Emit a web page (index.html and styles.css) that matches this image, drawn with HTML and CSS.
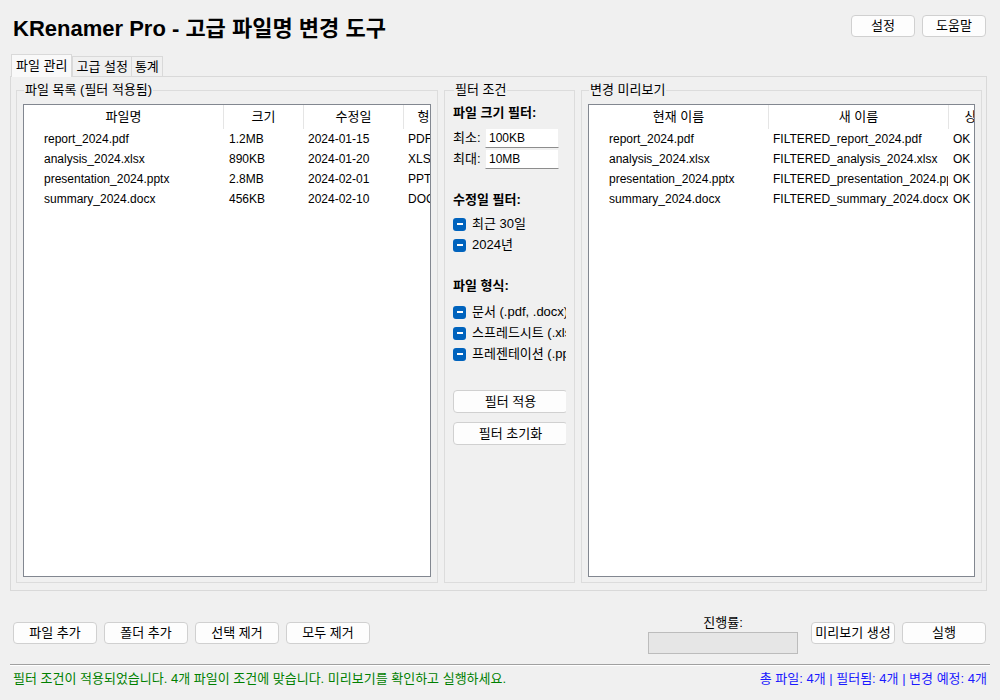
FILE: index.html
```html
<!DOCTYPE html>
<html lang="ko">
<head>
<meta charset="utf-8">
<title>KRenamer Pro</title>
<link rel="stylesheet" href="styles.css">
</head>
<body>
<div class="app">
  <header class="topbar">
    <h1 class="title">KRenamer Pro - 고급 파일명 변경 도구</h1>
    <div class="top-actions">
      <button class="btn btn-top">설정</button>
      <button class="btn btn-top">도움말</button>
    </div>
  </header>

  <nav class="tabs">
    <div class="tab active">파일 관리</div>
    <div class="tab">고급 설정</div>
    <div class="tab">통계</div>
  </nav>

  <section class="panel">
    <div class="group">
      <div class="group-title">파일 목록 (필터 적용됨)</div>
      <div class="listbox">
        <div class="grid grid-files head">
          <div class="hcell">파일명</div>
          <div class="hcell">크기</div>
          <div class="hcell">수정일</div>
          <div class="hcell">형식</div>
        </div>
        <div class="grid grid-files row">
          <div class="cell first">report_2024.pdf</div><div class="cell">1.2MB</div><div class="cell">2024-01-15</div><div class="cell">PDF</div>
        </div>
        <div class="grid grid-files row">
          <div class="cell first">analysis_2024.xlsx</div><div class="cell">890KB</div><div class="cell">2024-01-20</div><div class="cell">XLSX</div>
        </div>
        <div class="grid grid-files row">
          <div class="cell first">presentation_2024.pptx</div><div class="cell">2.8MB</div><div class="cell">2024-02-01</div><div class="cell">PPTX</div>
        </div>
        <div class="grid grid-files row">
          <div class="cell first">summary_2024.docx</div><div class="cell">456KB</div><div class="cell">2024-02-10</div><div class="cell">DOCX</div>
        </div>
      </div>
    </div>

    <div class="group group-filter">
      <div class="group-title">필터 조건</div>
      <div class="filter-body">
        <div class="section-label first-label">파일 크기 필터:</div>
        <div class="field-row first-field">
          <span class="field-label">최소:</span>
          <div class="input">100KB</div>
        </div>
        <div class="field-row">
          <span class="field-label">최대:</span>
          <div class="input">10MB</div>
        </div>

        <div class="section-label">수정일 필터:</div>
        <div class="checks">
          <div class="check"><span class="box"></span><span class="check-text">최근 30일</span></div>
          <div class="check"><span class="box"></span><span class="check-text">2024년</span></div>
        </div>

        <div class="section-label">파일 형식:</div>
        <div class="checks checks-type">
          <div class="check"><span class="box"></span><span class="check-text">문서 (.pdf, .docx)</span></div>
          <div class="check"><span class="box"></span><span class="check-text">스프레드시트 (.xlsx)</span></div>
          <div class="check"><span class="box"></span><span class="check-text">프레젠테이션 (.pptx)</span></div>
        </div>

        <button class="btn btn-wide btn-apply">필터 적용</button>
        <button class="btn btn-wide btn-reset">필터 초기화</button>
      </div>
    </div>

    <div class="group">
      <div class="group-title">변경 미리보기</div>
      <div class="listbox">
        <div class="grid grid-preview head">
          <div class="hcell">현재 이름</div>
          <div class="hcell">새 이름</div>
          <div class="hcell">상태</div>
        </div>
        <div class="grid grid-preview row">
          <div class="cell first">report_2024.pdf</div><div class="cell">FILTERED_report_2024.pdf</div><div class="cell">OK</div>
        </div>
        <div class="grid grid-preview row">
          <div class="cell first">analysis_2024.xlsx</div><div class="cell">FILTERED_analysis_2024.xlsx</div><div class="cell">OK</div>
        </div>
        <div class="grid grid-preview row">
          <div class="cell first">presentation_2024.pptx</div><div class="cell">FILTERED_presentation_2024.pptx</div><div class="cell">OK</div>
        </div>
        <div class="grid grid-preview row">
          <div class="cell first">summary_2024.docx</div><div class="cell">FILTERED_summary_2024.docx</div><div class="cell">OK</div>
        </div>
      </div>
    </div>
  </section>

  <div class="actions">
    <div class="action-left">
      <button class="btn btn-action">파일 추가</button>
      <button class="btn btn-action">폴더 추가</button>
      <button class="btn btn-action">선택 제거</button>
      <button class="btn btn-action">모두 제거</button>
    </div>
    <div class="action-right">
      <div class="progress-group">
        <div class="progress-label">진행률:</div>
        <div class="progress-bar"></div>
      </div>
      <button class="btn btn-action">미리보기 생성</button>
      <button class="btn btn-action">실행</button>
    </div>
  </div>

  <div class="separator"></div>

  <footer class="status">
    <span class="status-left">필터 조건이 적용되었습니다. 4개 파일이 조건에 맞습니다. 미리보기를 확인하고 실행하세요.</span>
    <span class="status-right">총 파일: 4개 | 필터됨: 4개 | 변경 예정: 4개</span>
  </footer>
</div>
</body>
</html>
```

FILE: styles.css
```css
* {
  box-sizing: border-box;
}

html, body {
  margin: 0;
  padding: 0;
  background: #f0f0f0;
}

body {
  font-family: "Liberation Sans", "Noto Sans CJK KR", sans-serif;
  font-size: 13px;
  line-height: 16px;
  color: #000;
}

.app {
  width: 1000px;
  height: 700px;
  display: flex;
  flex-direction: column;
  overflow: hidden;
}

/* ---------- top bar ---------- */
.topbar {
  display: flex;
  justify-content: space-between;
  align-items: flex-start;
  padding: 15px 14px 0 13px;
  height: 37px;
}

.title {
  margin: 3px 0 0 0;
  font-size: 22px;
  line-height: 22px;
  font-weight: bold;
  white-space: nowrap;
}

.top-actions {
  display: flex;
  gap: 7px;
}

.btn {
  font-family: inherit;
  font-size: 13px;
  line-height: 20px;
  height: 22px;
  padding: 0;
  margin: 0;
  background: #fdfdfd;
  border: 1px solid #d0d0d0;
  border-radius: 4px;
  color: #000;
  text-align: center;
  white-space: nowrap;
  overflow: hidden;
}

.btn-top {
  width: 64px;
}

/* ---------- tabs ---------- */
.tabs {
  display: flex;
  align-items: flex-end;
  height: 39px;
  padding: 0 0 0 11px;
}

.tab {
  height: 20px;
  line-height: 19px;
  padding: 0 3px;
  border: 1px solid #d9d9d9;
  border-bottom: none;
  margin-left: -1px;
  background: #f0f0f0;
  white-space: nowrap;
}

.tab.active {
  position: relative;
  z-index: 1;
  height: 23px;
  line-height: 21px;
  padding: 0 4px;
  margin-left: 0;
  margin-bottom: -1px;
  background: #f9f9f9;
  border-color: #d9d9d9;
}

.tab.active + .tab {
  margin-left: 0;
}

/* ---------- panel ---------- */
.panel {
  height: 515px;
  margin: 0 13px 0 10px;
  border: 1px solid #d9d9d9;
  padding: 13px 4px 7px 5px;
  display: grid;
  grid-template-columns: 422px 131px 1fr;
  column-gap: 6px;
}

.group {
  border: 1px solid #dcdcdc;
  padding: 0 6px 5px 6px;
  display: flex;
  flex-direction: column;
  min-width: 0;
}

.group-title {
  margin: -9px 0 0 1px;
  padding: 0 1px;
  height: 16px;
  line-height: 16px;
  width: fit-content;
  background: #f0f0f0;
  white-space: nowrap;
}

.listbox {
  margin-top: 6px;
  flex: 1;
  background: #fff;
  border: 1px solid #828790;
  overflow: hidden;
}

.grid {
  display: grid;
}

.grid-files {
  grid-template-columns: 199px 80px 100px 52px;
}

.grid-preview {
  grid-template-columns: 179px 180px 56px;
}

.head {
  height: 24px;
}

.hcell {
  text-align: center;
  line-height: 23px;
  white-space: nowrap;
  overflow: hidden;
}

.hcell + .hcell {
  border-left: 1px solid #e5e5e5;
}

.row {
  height: 20px;
}

.cell {
  font-size: 12px;
  padding-left: 5px;
  line-height: 20px;
  white-space: nowrap;
  overflow: hidden;
}

.grid-files .cell:nth-child(2) {
  padding-left: 6px;
}

.cell.first {
  padding-left: 20px;
}

/* ---------- filter column ---------- */
.group-filter {
  padding: 0 8px 5px 8px;
}

.filter-body {
  display: flex;
  flex-direction: column;
  overflow: hidden;
}

.section-label {
  font-weight: bold;
  height: 16px;
  line-height: 16px;
  margin-top: 23px;
  white-space: nowrap;
}

.section-label.first-label {
  margin-top: 7px;
}

.field-row {
  display: flex;
  align-items: center;
  height: 20px;
  margin-top: 1px;
}

.field-row.first-field {
  margin-top: 7px;
}

.field-label {
  width: 32px;
  flex: none;
  white-space: nowrap;
}

.input {
  width: 74px;
  height: 20px;
  line-height: 19px;
  padding-left: 3px;
  font-size: 12px;
  background: #fff;
  border: 1px solid #f0f0f0;
  border-bottom-color: #8d8d8d;
}

.checks {
  display: flex;
  flex-direction: column;
  gap: 1px;
  margin-top: 6px;
}

.checks-type {
  margin-top: 8px;
}

.check {
  display: flex;
  align-items: center;
  height: 20px;
  white-space: nowrap;
  overflow: hidden;
}

.box {
  flex: none;
  width: 13px;
  height: 13px;
  border-radius: 3px;
  background: #0063bd;
  display: flex;
  align-items: center;
  justify-content: center;
  margin-right: 6px;
}

.box::before {
  content: "";
  width: 6px;
  height: 2px;
  background: #fff;
}

.check-text {
  white-space: nowrap;
}

.btn-wide {
  width: 115px;
  height: 23px;
  line-height: 21px;
}

.btn-apply {
  margin-top: 26px;
}

.btn-reset {
  margin-top: 9px;
}

/* ---------- actions ---------- */
.actions {
  display: flex;
  justify-content: space-between;
  align-items: flex-start;
  margin-top: 24px;
  padding: 0 14px 0 13px;
  height: 39px;
}

.action-left,
.action-right {
  display: flex;
  align-items: flex-start;
  gap: 7px;
}

.action-left .btn,
.action-right .btn {
  margin-top: 7px;
}

.btn-action {
  width: 84px;
}

.progress-group {
  width: 150px;
  margin-right: 6px;
  display: flex;
  flex-direction: column;
  align-items: center;
}

.progress-label {
  height: 16px;
  line-height: 16px;
  margin-bottom: 1px;
}

.progress-bar {
  width: 150px;
  height: 22px;
  background: #e6e6e6;
  border: 1px solid #bcbcbc;
}

/* ---------- status ---------- */
.separator {
  margin: 10px 10px 0 10px;
  height: 2px;
  border-top: 1px solid #a0a0a0;
  border-bottom: 1px solid #ffffff;
}

.status {
  display: flex;
  justify-content: space-between;
  padding: 5px 13px 0 13px;
  line-height: 16px;
  white-space: nowrap;
}

.status-left {
  color: #008000;
}

.status-right {
  color: #1a1aff;
}
```
